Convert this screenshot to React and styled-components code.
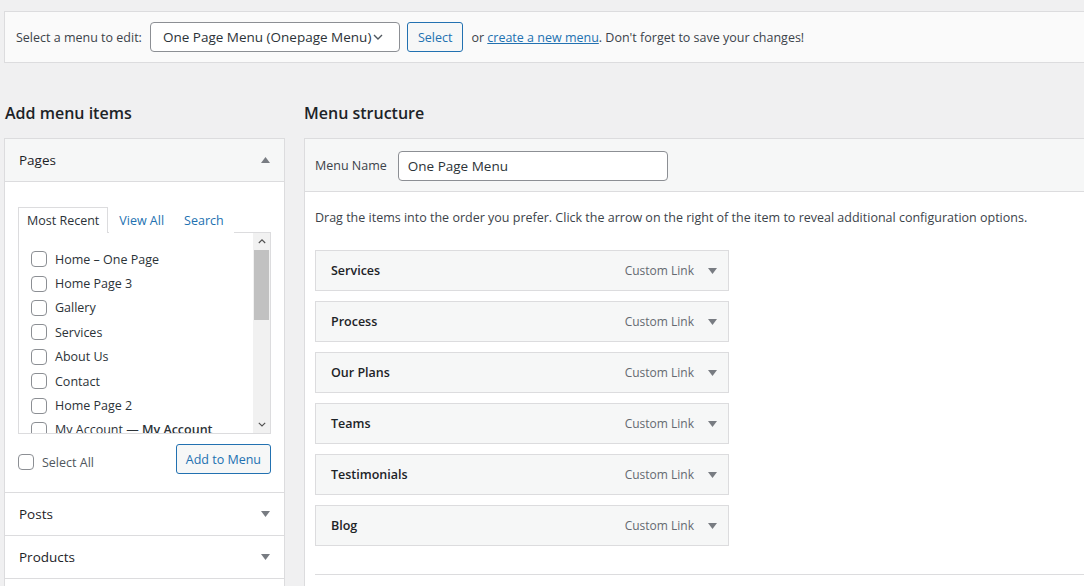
import React from "react";
import styled, { createGlobalStyle } from "styled-components";

const GlobalStyle = createGlobalStyle`
  html, body {
    margin: 0;
    background: #f0f0f1;
    font-family: "Open Sans", "Noto Sans", sans-serif;
    font-size: 12.5px;
    color: #3c434a;
  }
  * { box-sizing: border-box; }
`;

const Page = styled.div`
  width: 1084px;
  height: 586px;
  overflow: hidden;
  padding: 11px 0 0 4px;
`;

const TopBar = styled.div`
  display: flex;
  align-items: center;
  height: 52px;
  margin-right: -10px;
  padding: 0 0 0 11px;
  background: #fafafa;
  border: 1px solid #dcdcde;
  white-space: nowrap;
`;

const Label = styled.span`
  margin-right: 8px;
`;

const SelectBox = styled.div`
  display: flex;
  align-items: center;
  justify-content: space-between;
  width: 250px;
  height: 30px;
  padding: 0 16px 0 12px;
  border: 1px solid #8c8f94;
  border-radius: 4px;
  background: #fff;
  color: #2c3338;
  font-size: 13.5px;
`;

const Button = styled.button`
  height: 30px;
  padding: 0 ${(p) => p.$pad || 10}px;
  margin-left: ${(p) => p.$ml || 0}px;
  border: 1px solid #2271b1;
  border-radius: 3px;
  background: #f6f7f7;
  color: #2271b1;
  font-family: inherit;
  font-size: 12.5px;
`;

const Note = styled.span`
  margin-left: 8px;
`;

const Link = styled.a`
  color: #2271b1;
  text-decoration: underline;
`;

const Columns = styled.div`
  display: flex;
  gap: 19px;
  margin-top: 38px;
`;

const Heading = styled.h2`
  margin: 0 0 12px ${(p) => (p.$flush ? 0 : 1)}px;
  font-size: 16px;
  font-weight: 600;
  line-height: 25px;
  color: #1d2327;
`;

const LeftCol = styled.div`
  width: 281px;
  flex-shrink: 0;
`;

const RightCol = styled.div`
  flex: 1;
  margin-right: -20px;
`;

const Accordion = styled.div`
  background: #fff;
  border: 1px solid #dcdcde;
`;

const SectionTitle = styled.div`
  display: flex;
  align-items: center;
  justify-content: space-between;
  height: 43px;
  padding: 0 14px 0 14px;
  border-top: ${(p) => (p.$first ? "none" : "1px solid #dcdcde")};
  border-bottom: ${(p) => (p.$open ? "1px solid #dcdcde" : "none")};
  background: ${(p) => (p.$open ? "#f6f7f7" : "#fff")};
  color: #1d2327;
  font-size: 13.5px;
`;

const SectionBody = styled.div`
  padding: 24px 13px 18px 13px;
`;

const Tabs = styled.div`
  display: flex;
  align-items: flex-end;
  height: 26px;
`;

const Tab = styled.span`
  display: flex;
  align-items: center;
  height: 26px;
  padding: 0 ${(p) => (p.$active ? 8 : 9)}px;
  margin-right: ${(p) => (p.$active ? 1 : 0)}px;
  border: 1px solid ${(p) => (p.$active ? "#dcdcde" : "transparent")};
  border-bottom: none;
  background: #fff;
  color: ${(p) => (p.$active ? "#2c3338" : "#2271b1")};
  position: relative;
  top: 1px;
`;

const ListPanel = styled.div`
  display: flex;
  height: 202px;
  border: 1px solid #dcdcde;
  background: #fff;
  overflow: hidden;
`;

const List = styled.div`
  flex: 1;
  padding: 14px 0 0 12px;
`;

const Row = styled.label`
  display: flex;
  align-items: center;
  gap: 8px;
  height: 24.4px;
  color: #2c3338;
  white-space: nowrap;
`;

const Check = styled.span`
  width: 16px;
  height: 16px;
  flex-shrink: 0;
  border: 1px solid #8c8f94;
  border-radius: 4px;
  background: #fff;
`;

const Scrollbar = styled.div`
  display: flex;
  flex-direction: column;
  align-items: center;
  width: 17px;
  background: #f1f1f1;
`;

const ScrollArrow = styled.div`
  height: 17px;
  display: flex;
  align-items: center;
  justify-content: center;
`;

const Thumb = styled.div`
  width: 15px;
  height: 70px;
  background: #c1c1c1;
`;

const ActionRow = styled.div`
  display: flex;
  align-items: center;
  justify-content: space-between;
  margin-top: 10px;
`;

const SelectAll = styled.label`
  display: flex;
  align-items: center;
  gap: 8px;
  padding-top: 6px;
  color: #50575e;
`;

const StructureBox = styled.div`
  background: #fff;
  border: 1px solid #dcdcde;
  border-right: none;
  height: 460px;
`;

const NameBar = styled.div`
  display: flex;
  align-items: center;
  height: 53px;
  padding: 1px 0 0 10px;
  background: #f6f7f7;
  border-bottom: 1px solid #dcdcde;
`;

const NameLabel = styled.span`
  margin-right: 11px;
`;

const TextInput = styled.div`
  display: flex;
  align-items: center;
  width: 270px;
  height: 30px;
  padding: 0 9px;
  border: 1px solid #8c8f94;
  border-radius: 4px;
  background: #fff;
  color: #2c3338;
  font-size: 13.5px;
`;

const Body = styled.div`
  padding: 17px 0 0 10px;
`;

const Hint = styled.p`
  margin: 0 0 23px;
  line-height: 18px;
  white-space: nowrap;
`;

const Items = styled.div`
  display: flex;
  flex-direction: column;
  gap: 10px;
  width: 414px;
`;

const Item = styled.div`
  display: flex;
  align-items: center;
  height: 41px;
  padding: 0 11px 0 15px;
  border: 1px solid #dcdcde;
  background: #f6f7f7;
`;

const ItemTitle = styled.span`
  flex: 1;
  font-weight: 600;
  color: #1d2327;
`;

const ItemType = styled.span`
  color: #646970;
  font-size: 12px;
  margin-right: 14px;
`;

const Divider = styled.div`
  margin-top: 28px;
  border-top: 1px solid #dcdcde;
`;

const Chevron = ({ up, size = 10, color = "#50575e" }) => (
  <svg width={size} height={size * 0.6} viewBox="0 0 10 6">
    <polyline
      points={up ? "1,5 5,1 9,5" : "1,1 5,5 9,1"}
      fill="none"
      stroke={color}
      strokeWidth="1.4"
    />
  </svg>
);

const Caret = ({ up }) => (
  <svg width="9" height="6" viewBox="0 0 9 6">
    <polygon points={up ? "0,6 4.5,0 9,6" : "0,0 9,0 4.5,6"} fill="#787c82" />
  </svg>
);

const pages = [
  "Home – One Page",
  "Home Page 3",
  "Gallery",
  "Services",
  "About Us",
  "Contact",
  "Home Page 2",
];

const items = ["Services", "Process", "Our Plans", "Teams", "Testimonials", "Blog"];

export default function App() {
  return (
    <Page>
      <GlobalStyle />
      <TopBar>
        <Label>Select a menu to edit:</Label>
        <SelectBox>
          <span>One Page Menu (Onepage Menu)</span>
          <Chevron size={10} color="#50575e" />
        </SelectBox>
        <Button $ml={7}>Select</Button>
        <Note>
          or <Link>create a new menu</Link>. Don't forget to save your changes!
        </Note>
      </TopBar>

      <Columns>
        <LeftCol>
          <Heading>Add menu items</Heading>
          <Accordion>
            <SectionTitle $first $open>
              <span>Pages</span>
              <Caret up />
            </SectionTitle>
            <SectionBody>
              <Tabs>
                <Tab $active>Most Recent</Tab>
                <Tab>View All</Tab>
                <Tab>Search</Tab>
              </Tabs>
              <ListPanel>
                <List>
                  {pages.map((p) => (
                    <Row key={p}>
                      <Check />
                      {p}
                    </Row>
                  ))}
                  <Row>
                    <Check />
                    <span>
                      My Account — <b style={{ fontWeight: 600 }}>My Account</b>
                    </span>
                  </Row>
                </List>
                <Scrollbar>
                  <ScrollArrow>
                    <Chevron up size={8} color="#505050" />
                  </ScrollArrow>
                  <Thumb />
                  <div style={{ flex: 1 }} />
                  <ScrollArrow>
                    <Chevron size={8} color="#505050" />
                  </ScrollArrow>
                </Scrollbar>
              </ListPanel>
              <ActionRow>
                <SelectAll>
                  <Check />
                  Select All
                </SelectAll>
                <Button $pad={9}>Add to Menu</Button>
              </ActionRow>
            </SectionBody>
            <SectionTitle>
              <span>Posts</span>
              <Caret />
            </SectionTitle>
            <SectionTitle>
              <span>Products</span>
              <Caret />
            </SectionTitle>
            <SectionTitle>
              <span>Custom Links</span>
              <Caret />
            </SectionTitle>
          </Accordion>
        </LeftCol>

        <RightCol>
          <Heading $flush>Menu structure</Heading>
          <StructureBox>
            <NameBar>
              <NameLabel>Menu Name</NameLabel>
              <TextInput>One Page Menu</TextInput>
            </NameBar>
            <Body>
              <Hint>
                Drag the items into the order you prefer. Click the arrow on the
                right of the item to reveal additional configuration options.
              </Hint>
              <Items>
                {items.map((it) => (
                  <Item key={it}>
                    <ItemTitle>{it}</ItemTitle>
                    <ItemType>Custom Link</ItemType>
                    <Caret />
                  </Item>
                ))}
              </Items>
              <Divider />
            </Body>
          </StructureBox>
        </RightCol>
      </Columns>
    </Page>
  );
}
